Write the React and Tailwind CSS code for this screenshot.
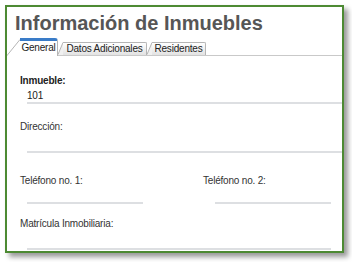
import React from "react";

const font = { fontFamily: '"Liberation Sans", Arial, sans-serif' };

const Slant = ({ w, h, fill }) => (
  <svg width={w} height={h} className="block shrink-0">
    <polygon points={`0,${h} ${w},0 ${w},${h}`} fill={fill} />
    <line x1="0" y1={h - 0.5} x2={w} y2="0.5" stroke="#b5b5b5" strokeWidth="1" />
  </svg>
);

const Field = () => <div className="h-[2px] bg-[#dddfe2]" />;

export default function App() {
  return (
    <div className="w-[352px] h-[262px] bg-white overflow-hidden" style={font}>
      <div className="ml-[5px] mt-[5px] w-[339px] h-[248px] border-2 border-[#4d8a33] bg-white shadow-[4px_4px_5px_rgba(0,0,0,0.4)] overflow-hidden">
        {/* Title */}
        <h1 className="pl-[8px] pt-[5px] h-[26px] text-[20px] leading-[22px] font-bold text-[#565656] whitespace-nowrap">
          Información de Inmuebles
        </h1>

        {/* Tabs */}
        <div className="mt-[5px] flex items-end h-[18px] border-b border-[#c9c9c9] text-[10px] tracking-[-0.2px] whitespace-nowrap text-[#222]">
          <div className="flex items-end -mb-px">
            <Slant w={13} h={17} fill="#ffffff" />
            <div className="w-[38px] h-[18px] bg-white border-t-[3px] border-[#3a7cc8] border-r border-r-[#b5b5b5] rounded-tr-[3px] leading-[13px] text-center">
              General
            </div>
          </div>
          <div className="flex items-end">
            <Slant w={5} h={13} fill="#f0f0f0" />
            <div className="w-[84px] h-[13px] bg-gradient-to-b from-white to-[#e2e2e2] border-t border-r border-[#b5b5b5] rounded-tr-[2px] leading-[12px] text-center">
              Datos Adicionales
            </div>
          </div>
          <div className="flex items-end">
            <Slant w={5} h={13} fill="#f0f0f0" />
            <div className="w-[54px] h-[13px] bg-gradient-to-b from-white to-[#e2e2e2] border-t border-r border-[#b5b5b5] rounded-tr-[2px] leading-[12px] text-center">
              Residentes
            </div>
          </div>
        </div>

        {/* Form */}
        <div className="pl-[13px] text-[10px] tracking-[-0.2px] leading-[13px] text-[#333] whitespace-nowrap">
          <div className="mt-[18px] font-bold text-[#222]">Inmueble:</div>
          <div className="mt-[2px] pl-[7px] h-[13px] text-[#222]">101</div>
          <div className="ml-[7px]">
            <Field />
          </div>

          <div className="mt-[16px]">Dirección:</div>
          <div className="ml-[7px] mt-[18px]">
            <Field />
          </div>

          <div className="mt-[21px] flex">
            <div className="w-[183px]">
              <div>Teléfono no. 1:</div>
              <div className="ml-[7px] mt-[15px] w-[116px]">
                <Field />
              </div>
            </div>
            <div>
              <div>Teléfono no. 2:</div>
              <div className="ml-[12px] mt-[15px] w-[116px]">
                <Field />
              </div>
            </div>
          </div>

          <div className="mt-[13px]">Matrícula Inmobiliaria:</div>
          <div className="ml-[7px] mt-[18px] w-[304px]">
            <Field />
          </div>
        </div>
      </div>
    </div>
  );
}
